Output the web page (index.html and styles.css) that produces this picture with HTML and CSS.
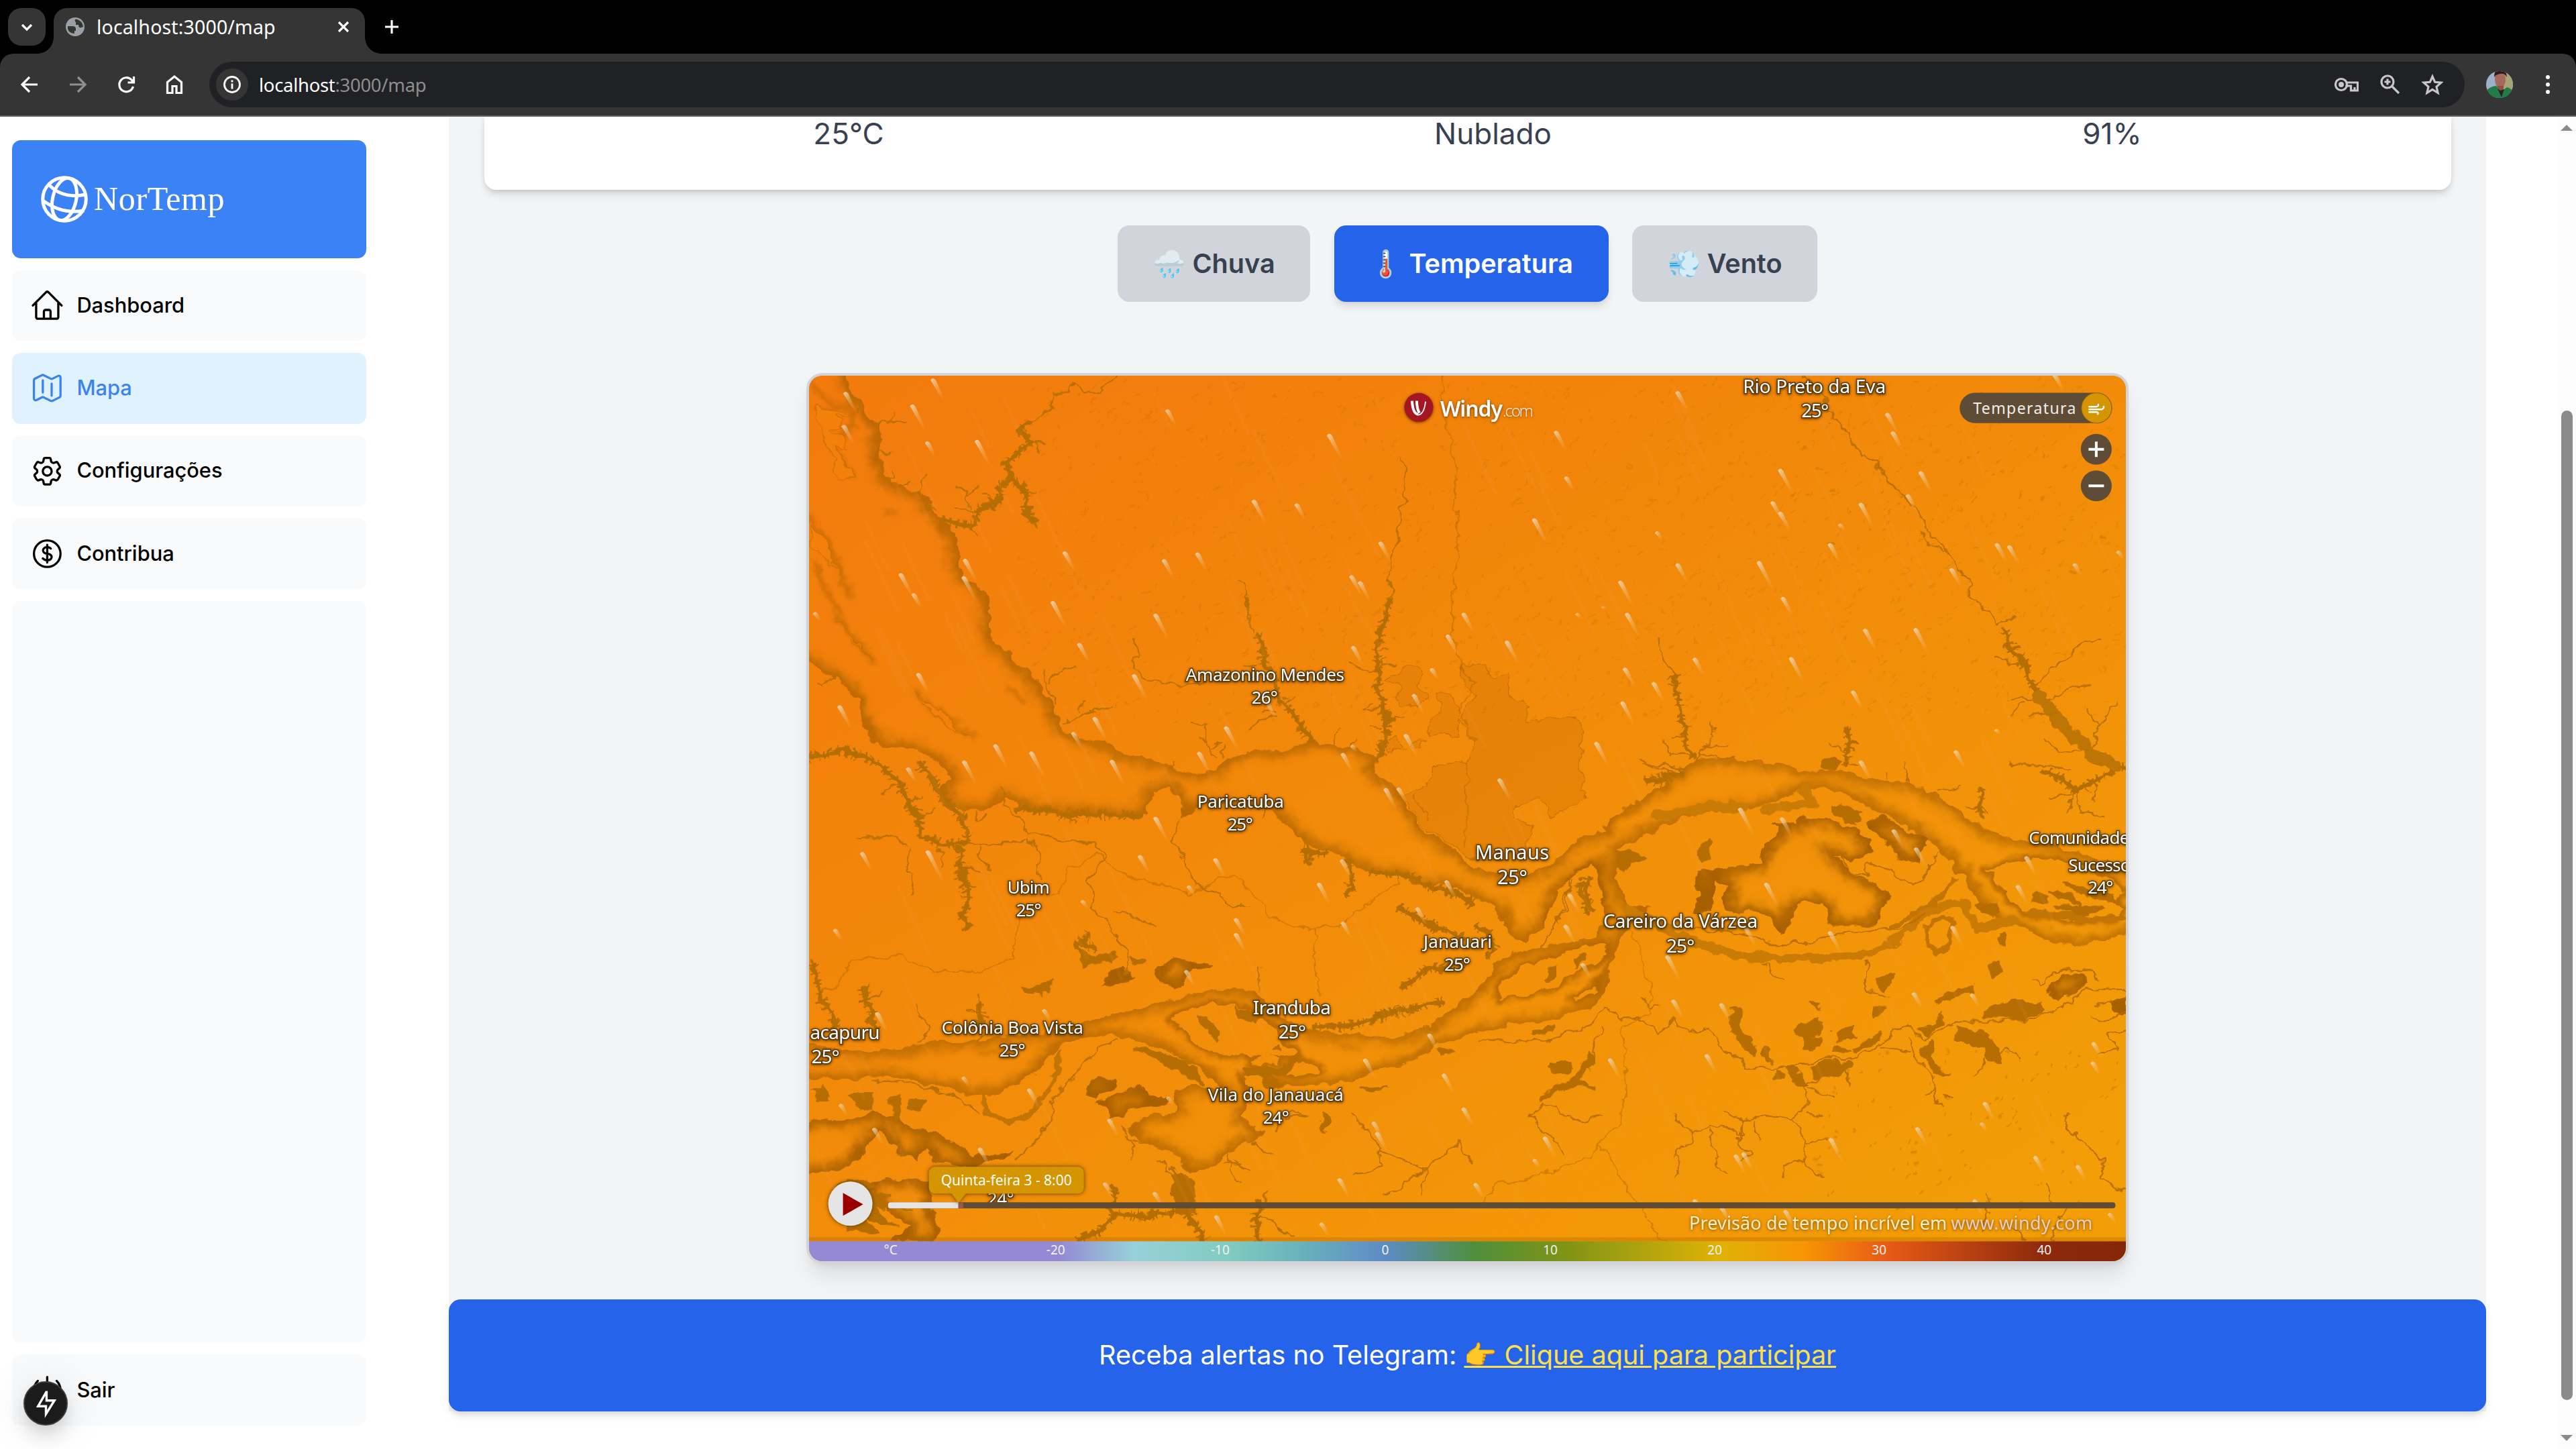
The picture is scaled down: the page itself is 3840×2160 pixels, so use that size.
FILE: index.html
```html
<!DOCTYPE html>
<html lang="pt-BR">
<head>
<meta charset="utf-8">
<title>NorTemp</title>
<link rel="stylesheet" href="styles.css">
</head>
<body>
<header class="browser">
  <div class="tabs">
    <div class="tab-search"><svg viewBox="0 0 56 56"><path d="M21 25l7 7 7-7" class="ln w3"/></svg></div>
    <div class="tab">
      <svg class="favicon" viewBox="0 0 28 28"><circle cx="14" cy="14" r="14" fill="#9aa0a6"/><path d="M3 13h7q5 0 5 4v3h-2v4q-8 0-10-7zM14 3q-1 3 1 4v4h4q0 5 4 4l3-1Q25 5 16 2.500z" fill="#353535"/></svg>
      <span class="tab-title">localhost:3000/map</span>
      <svg class="tab-close" viewBox="0 0 20 20"><path d="M3 3l14 14M17 3L3 17" class="ln w3"/></svg>
    </div>
    <svg class="new-tab" viewBox="0 0 20 20"><path d="M10 0v20M0 10h20" class="ln w3"/></svg>
  </div>
  <div class="toolbar">
    <nav class="nav-icons">
      <svg viewBox="0 0 32 32"><path d="M28 16H6M16 5L5 16l11 11" class="ln w3"/></svg>
      <svg viewBox="0 0 32 32" class="dim"><path d="M4 16h22M16 5l11 11-11 11" class="ln w3"/></svg>
      <svg viewBox="0 0 32 32"><path d="M26.500 19A10.500 10.500 0 1 1 24 9l3 3.500M27.500 4v9h-9" class="ln w3"/></svg>
      <svg viewBox="0 0 32 32"><path d="M5.500 28.500V12.500L16 4l10.500 8.500v16h-7.500v-10h-6v10z" class="ln w3"/></svg>
    </nav>
    <div class="omnibox">
      <span class="site-info"><svg viewBox="0 0 28 28"><circle cx="14" cy="14" r="11.500" class="ln w25"/><path d="M14 12.500v8M14 7.500v3" class="ln w25"/></svg></span>
      <span class="url">localhost<i>:3000/map</i></span>
      <div class="omni-icons">
        <svg width="36" height="36" viewBox="0 0 36 36"><circle cx="10" cy="18" r="8.500"/><circle cx="10" cy="18" r="4" class="solid"/><path d="M17 15h17.500v12h-10v-7h-8M30 27v-5"/></svg>
        <svg width="32" height="32" viewBox="0 0 32 32"><circle cx="12" cy="12" r="9"/><path d="M18.500 18.500L29 29M12 7.500v9M7.500 12h9"/></svg>
        <svg width="32" height="32" viewBox="0 0 32 32"><path d="M16 4l3.700 8.300 9.300.8-7 6.200 2.100 9.200-8.100-5-8.100 5L10 19.300l-7-6.200 9.300-.8z"/></svg>
      </div>
    </div>
    <svg class="avatar" viewBox="0 0 40 40"><rect width="40" height="40" fill="#9db2c9"/><rect x="26" width="14" height="26" fill="#a8a574"/><ellipse cx="21" cy="12" rx="8" ry="14" fill="#a9695a"/><path d="M12 9Q12-3 21-3t10 12Q28 3 21 4T12 9z" fill="#2a1b1d"/><path d="M17 22h9v6l-5 4-5-5z" fill="#8f5145"/><path d="M0 40V29q8-7 15-7l7 9 9-7q7 2 9 6v10z" fill="#1f7d45"/><path d="M17 26l4 3 6-2-4 12z" fill="#2b2028"/></svg>
    <div class="kebab"><b></b><b></b><b></b></div>
  </div>
</header>
<div class="page">
  <aside class="sidebar">
    <div class="brand">
      <svg viewBox="0 0 70 70"><g fill="none" stroke="#fff" stroke-width="5"><circle cx="35" cy="35" r="32.300"/><ellipse cx="35" cy="35" rx="17.500" ry="32" transform="rotate(13 35 35)"/><path d="M11 12Q30 35 67 28M3 37Q32 58 64 52"/></g></svg>
      <span>NorTemp</span>
    </div>
    <a class="item"><svg viewBox="0 0 24 24"><path d="M2.250 12l8.954-8.955c.44-.439 1.152-.439 1.591 0L21.750 12M4.500 9.750v10.125c0 .621.504 1.125 1.125 1.125H9.750v-4.875c0-.621.504-1.125 1.125-1.125h2.250c.621 0 1.125.504 1.125 1.125V21h4.125c.621 0 1.125-.504 1.125-1.125V9.750M8.250 21h8.250"/></svg><span>Dashboard</span></a>
    <a class="item active"><svg viewBox="0 0 24 24"><path d="M9 6.750V15m6-6v8.250m.503 3.498l4.875-2.437c.381-.19.622-.58.622-1.006V4.820c0-.836-.88-1.380-1.628-1.006l-3.869 1.934c-.317.159-.69.159-1.006 0L9.503 3.252a1.125 1.125 0 00-1.006 0L3.622 5.689C3.240 5.880 3 6.270 3 6.695V19.180c0 .836.880 1.380 1.628 1.006l3.869-1.934c.317-.159.690-.159 1.006 0l4.994 2.497c.317.158.690.158 1.006 0z"/></svg><span>Mapa</span></a>
    <a class="item"><svg viewBox="0 0 24 24"><path d="M9.594 3.940c.090-.542.560-.940 1.110-.940h2.593c.550 0 1.020.398 1.110.940l.213 1.281c.063.374.313.686.645.870.074.040.147.083.220.127.324.196.720.257 1.075.124l1.217-.456a1.125 1.125 0 011.370.490l1.296 2.247a1.125 1.125 0 01-.260 1.431l-1.003.827c-.293.240-.438.613-.431.992a6.759 6.759 0 010 .255c-.007.378.138.750.430.990l1.005.828c.424.350.534.954.260 1.430l-1.298 2.247a1.125 1.125 0 01-1.369.491l-1.217-.456c-.355-.133-.750-.072-1.076.124a6.570 6.570 0 01-.220.128c-.331.183-.581.495-.644.869l-.213 1.280c-.090.543-.560.941-1.110.941h-2.594c-.550 0-1.020-.398-1.110-.940l-.213-1.281c-.062-.374-.312-.686-.644-.870a6.520 6.520 0 01-.220-.127c-.325-.196-.720-.257-1.076-.124l-1.217.456a1.125 1.125 0 01-1.369-.490l-1.297-2.247a1.125 1.125 0 01.260-1.431l1.004-.827c.292-.240.437-.613.430-.992a6.932 6.932 0 010-.255c.007-.378-.138-.750-.430-.990l-1.004-.828a1.125 1.125 0 01-.260-1.430l1.297-2.247a1.125 1.125 0 011.370-.491l1.216.456c.356.133.751.072 1.076-.124.072-.044.146-.087.220-.128.332-.183.582-.495.644-.869l.214-1.281z"/><path d="M15 12a3 3 0 11-6 0 3 3 0 016 0z"/></svg><span>Configurações</span></a>
    <a class="item"><svg viewBox="0 0 24 24"><path d="M12 6v12m-3-2.818l.879.659c1.171.879 3.070.879 4.242 0 1.172-.879 1.172-2.303 0-3.182C13.536 12.219 12.768 12 12 12c-.725 0-1.450-.220-2.003-.659-1.106-.879-1.106-2.303 0-3.182s2.900-.879 4.006 0l.415.330M21 12a9 9 0 11-18 0 9 9 0 0118 0z"/></svg><span>Contribua</span></a>
    <div class="filler"></div>
    <a class="item"><svg viewBox="0 0 24 24"><path d="M5.636 5.636a9 9 0 1012.728 0M12 3v9"/></svg><span>Sair</span></a>
  </aside>
  <main class="content">
    <section class="summary"><span>25°C</span><span>Nublado</span><span>91%</span></section>
    <div class="layers">
      <button>🌧️ Chuva</button><button class="on">🌡️ Temperatura</button><button>💨 Vento</button>
    </div>
    <section class="map">
<svg id="map" viewBox="1206.400 560.400 1962.400 1319.200" preserveAspectRatio="none">
<defs>
  <linearGradient id="land" gradientUnits="userSpaceOnUse" x1="0" y1="0" x2="2600" y2="2979"><stop offset="0" stop-color="#f37a0d"/><stop offset=".35" stop-color="#f2850a"/><stop offset="1" stop-color="#f39d07"/></linearGradient>
  <linearGradient id="streak" x1="0" y1="0" x2="1" y2="1"><stop offset="0" stop-color="#e8ddc4" stop-opacity=".9"/><stop offset=".4" stop-color="#ecc68f" stop-opacity=".5"/><stop offset="1" stop-color="#f4b060" stop-opacity="0"/></linearGradient>
  <linearGradient id="scale"><stop offset="0" stop-color="#9589d3"/><stop offset=".19" stop-color="#9589d3"/><stop offset=".247" stop-color="#96d1d8"/><stop offset=".318" stop-color="#81cbc1"/><stop offset=".372" stop-color="#69b3bb"/><stop offset=".438" stop-color="#5d8bc5"/><stop offset=".505" stop-color="#4f8f3c"/><stop offset=".575" stop-color="#809415"/><stop offset=".69" stop-color="#dfb206"/><stop offset=".755" stop-color="#f79505"/><stop offset=".818" stop-color="#e85a16"/><stop offset=".937" stop-color="#8c2a0b"/><stop offset="1" stop-color="#842709"/></linearGradient>
  <filter id="b1" x="-10%" y="-10%" width="120%" height="120%"><feGaussianBlur stdDeviation="12 17"/></filter>
  <filter id="b2" x="-10%" y="-10%" width="120%" height="120%"><feGaussianBlur stdDeviation="6 8"/></filter>
  <filter id="rough" filterUnits="userSpaceOnUse" x="-60" y="-60" width="3220" height="3120" color-interpolation-filters="sRGB"><feTurbulence type="fractalNoise" baseFrequency=".03 .022" numOctaves="3" seed="4" result="n"/><feDisplacementMap in="SourceGraphic" in2="n" scale="34" xChannelSelector="R" yChannelSelector="G"/></filter>
  <path id="water" fill-rule="evenodd" d="
   M75 -40L105 60 135 120 165 170 175 230 180 340 220 395 270 410 320 500 350 560 362 660 376 695 410 730 432 770 430 860 445 925 480 950 490 985 530 1020 555 1080 585 1130 590 1190 640 1230 700 1250 750 1290 830 1315 880 1335 920 1355 960 1340 985 1300 1030 1275 1130 1272 1160 1260 1180 1235 1230 1250 1290 1270 1330 1300 1330 1350 1390 1400 1410 1460 1440 1530 1500 1586 1568 1664 1600 1680 1680 1695 1750 1650 1780 1600 1810 1570 1868 1545 1875 1500 1950 1440 2000 1390 2040 1340 2085 1305 2140 1298 2210 1310 2290 1322 2350 1340 2400 1330 2470 1365 2570 1385 2628 1410 2680 1460 2730 1510 2800 1566 2900 1586 2970 1606 3050 1650 3140 1690
   V1860L3040 1910 2970 1925 2900 1905 2830 1858 2780 1845 2740 1760 2680 1650 2620 1570 2570 1520 2500 1470 2440 1430 2380 1398 2330 1402 2270 1445 2190 1472 2080 1485 2000 1530 1920 1585 1898 1610 1898 1700 1920 1790 1975 1800 1925 1850 1890 1960 1870 2080 1835 2136 1750 2170 1650 2190 1568 2222
   L1480 2256 1430 2306 1380 2326 1280 2376 1200 2396 1110 2396 1040 2380 1035 2440 1020 2500 1050 2520 1075 2556 1010 2596 960 2656 900 2690 880 2630 800 2586 750 2540 790 2500 870 2480 860 2410 900 2392 990 2410 960 2386 910 2330 860 2286 800 2246 740 2231 690 2226 650 2236 600 2256 570 2296 540 2346 500 2386 450 2416 400 2426 340 2406 270 2386 200 2361 100 2371 -40 2374
   V2246L60 2266 140 2281 250 2266 300 2246 380 2246 440 2231 560 2216 640 2186 700 2156 780 2136 850 2106 930 2076 1000 2066 1050 2080 1100 2146 1140 2186 1200 2216 1300 2221 1380 2236 1440 2206 1500 2156 1568 2076 1620 1980 1680 1940 1760 1925 1850 1895 1870 1830 1855 1750 1850 1650 1800 1690 1760 1740 1725 1860 1680 1915 1645 1890 1620 1800 1568 1770
   1500 1720 1420 1722 1400 1690 1310 1675 1250 1620 1170 1590 1130 1520 1090 1480 1000 1460 930 1450 885 1500 880 1450 850 1395 810 1410 795 1490 740 1495 680 1480 600 1482 510 1465 470 1430 430 1470 370 1475 320 1450 315 1410 345 1370 320 1330 260 1270 200 1265 160 1240 130 1170 120 1090 60 1025 -40 935V-40z"/>
  <path id="isles" d="M2763 1671L2858 1636 2940 1640 3050 1700 3087 1745 3060 1775 3087 1800 3050 1841 2958 1836 2858 1815 2808 1756z
   M1623 2101L1628 2046 1690 1986 1768 1956 1873 1916 1868 1956 1808 2016 1748 2066 1688 2091z
   M860 2171L900 2136 960 2121 1010 2121 1080 2176 1145 2286 1120 2296 1030 2291 980 2291 930 2266 900 2226z
   M1040 2306L1075 2291 1115 2304 1100 2321 1060 2326z M1120 2351L1150 2306 1190 2326 1200 2346 1150 2361z M1025 2356L1060 2350 1100 2380 1050 2395 1028 2385z
   M1740 1840L1800 1690 1845 1660 1858 1780 1850 1830 1760 1890z
   M1800 2100L1850 2050 1845 2075 1810 2105z"/>
  <path id="lakes" d="M2328 1496L2398 1506 2468 1546 2498 1606 2448 1646 2408 1626 2438 1676 2498 1716 2542 1756 2518 1806 2498 1860 2398 1860 2378 1786 2338 1776 2308 1806 2308 1846 2278 1886 2248 1826 2218 1811 2158 1816 2148 1776 2158 1726 2128 1706 2118 1816 2078 1816 2088 1756 2078 1676 2168 1666 2228 1656 2248 1586 2278 1536 2258 1516 2318 1526z
   M2478 1521L2518 1486 2568 1536 2628 1566 2608 1616 2608 1656 2558 1636 2518 1566z
   M-40 2520L60 2501 120 2506 160 2476 210 2496 250 2536 300 2546 340 2576 400 2626 490 2614 465 2641 360 2666 300 2640 280 2600 260 2640 220 2626 180 2546 150 2570 130 2636 80 2671 -40 2700z
   M140 2720L200 2700 290 2716 300 2806 320 2876 300 2912 200 2912 245 2860 180 2800z
   M825 2000L860 1960 950 1990 945 2000 910 2005 885 2045 865 2075 830 2045z M690 2060L740 1990 775 2035 740 2050z
   M650 2420L670 2370 730 2365 725 2400 680 2440z M680 2450L770 2400 795 2390 800 2430 850 2430 850 2460 760 2470 720 2505z
   M2900 2090L2930 2020 2980 2015 3000 2050 2960 2090 2930 2110z M3050 2110L3087 2090V2170L3060 2140z"/>
  <clipPath id="cw"><use href="#water"/></clipPath>
  <clipPath id="cl"><use href="#lakes"/></clipPath>
</defs>
<g transform="translate(1200 550) scale(.637755 .446429)">
 <rect width="3100" height="3000" fill="url(#land)"/>
 <g filter="url(#rough)">
  <rect x="-60" y="-60" width="3220" height="3120" fill="url(#land)"/>
  <path fill="#d97808" opacity=".42" stroke="#7e4800" stroke-width="2" d="M1590 990L1605 1025 1650 1010 1655 1100 1688 1120 1692 1175 1800 1160 1818 1200 1812 1330 1828 1440 1780 1470 1745 1500 1735 1460 1715 1430 1670 1450 1660 1500 1700 1530 1690 1600 1640 1640 1568 1640 1500 1580 1440 1520 1400 1420 1460 1390 1470 1330 1545 1310 1565 1250 1530 1170 1568 1090 1545 1060 1530 985zM1360 1040l40-45 38-2-2 60 20 35-28 45-40-10-10-30 20-20zM1480 1085l30 0 20 40-5 60 0 40-30-5-35 5 0-60 20-20zM1360 1240l20-10 25 40-45 5zM1415 1240l30-5-10 30-20-5z"/>
  <g id="terrain"></g>
  <g class="road"><path d="M1490 22L1485 120 1518 270 1528 590 1515 800 1528 990 1568 1050 1530 1140 1568 1250M1545 1310V1595M1440 1526L1390 1620 1385 1720 1340 1760 1250 1860 1180 1866 1105 1850 1010 1696 965 1696 910 1755 745 1686 685 1620 620 1660 615 1710 575 1755M505 1800L485 1966 410 2011 300 2006 225 1960 110 1975 70 2066 20 2090M1195 1866l-5 160 15 30v40M1935 1880l15 100 30 80-5 90-60 50-5 300-80 140-140 60-70 25-50 70M1858 2594L2010 2925M1460 1500l-25-40-10-40"/></g>
  <use href="#water" fill="url(#land)"/>
  <g clip-path="url(#cw)"><g filter="url(#b1)" fill="none" stroke="#a65f02" opacity=".8"><use href="#water" stroke-width="36"/></g><g filter="url(#b2)" fill="none" stroke="#a65f02" opacity=".75"><use href="#isles" stroke-width="26"/><path stroke-width="8" d="M9 490L60 600 85 690 110 770M20 640L80 830 160 980M250 1070L300 1130 400 1235M470 1060l50 60M20 130l90 10 0 60-45 60 40 100M10 50l60 70 40 0M180 480h35M400 2285h70M1240 2260l60 10"/></g></g>
  <use href="#isles" fill="url(#land)"/>
  <use href="#lakes" fill="url(#land)"/>
  <g clip-path="url(#cl)"><use href="#lakes" fill="none" stroke="#a65f02" stroke-width="40" filter="url(#b1)"/></g>
  <g class="isle-detail"><path d="M20 120l20 100 25 80 20 70 25-10-25-60-10-40 25 10-15-50-30-20 40 0-20-40 30 0zM15 520l40 80 25 90-25-60-40-40zM80 840l75 130-50-70zM255 1080l50 50 80 100-60-50z"/></g>
  <g class="trib thick"><path d="M1990 1490l90-20 60-10 60 4M2240 1470l60-10 60-15-30-50"/><path d="M1920 1800C2000 1860 2080 1925 2170 1955 2240 1972 2400 1975 2490 1948 2560 1915 2570 1870 2620 1815 2670 1775 2710 1770 2720 1820 2735 1870 2740 1885 2790 1850L2830 1845"/></g>
  <g class="trib loop"><path d="M595 2280C590 2360 570 2436 520 2490 480 2520 430 2520 415 2430M2868 1815l100 10 60 15 60-10M2540 1860l60-50 70-60 15-45M2620 1860l0 60 30 35 30-40 5-70-25-20-30 30"/></g>
  <g class="trib mid" id="branches">
    <path d="M320 505L360 520 395 515 410 470 455 435 455 400 475 370 470 320 500 280 525 240 505 210 525 180M475 370L510 390 520 450 520 490 540 510"/>
    <path d="M1060 890L1070 930 1075 1000 1100 1040 1110 1110 1140 1150 1165 1200 1180 1240M1370 770L1355 830 1345 890 1338 1000 1348 1120 1365 1170 1360 1230 1335 1310"/>
    <path d="M10 1295L90 1275 150 1300 195 1340 225 1400 245 1450 270 1500 272 1560 330 1590 380 1580 375 1500 340 1470 315 1410 290 1350 270 1320M358 1600l10 80 10 70-10 70 15 50"/>
    <path d="M2030 1030L2045 1100 2048 1180 2055 1250 2075 1300M2434 1200L2442 1260 2432 1320M2800 870L2820 930 2850 990 2870 1070 2900 1110 2930 1170 2980 1250 3020 1300 3087 1335M3050 1340L3000 1390 2970 1410 2940 1370 2900 1340M2745 1410v90M2045 1340l-40 30-45 5"/>
    <path d="M860 2670L870 2780 900 2830 930 2912M720 2820L780 2830 860 2810M720 2820L690 2880 640 2912M720 2820V2730M1060 2912l-5-100 5-40M500 1465l100 20 90 0 90 12"/>
    <path d="M1190 2200L1280 2190 1380 2150 1490 2110M1400 2060L1460 2000 1540 1990M1390 1800L1430 1830 1480 1870 1540 1900M1330 2160l100-30"/>
    <path d="M1825 1700l5 90 15 20M1810 1720l20 100M1220 1620l-60-15 20 40M1270 1640l15 60-20 60M1320 1680l100 15 50 40 60 20 30 30M680 1930l-40-10 20-30M1568 1860l40 40-10 60M130 2060l25 80 5 80M410 2120l0 60-20 20M20 1990l15 100 40 110"/>
  </g>
  <g class="trib big"><path d="M2885 1095L2920 1160 2960 1220 3010 1290 3060 1325"/></g>
  <g class="trib thin"><path d="M525 180L550 160 575 130 580 85 620 85 630 50 650 75 690 80 725 22M530 245l30 5M530 245l20 35M540 510l2 25M515 420l25-10M385 515l15 45M400 480l-50-10M385 470l-5-60-20-20M380 430l20-30M430 430l-10-15M165 190l15-15 30 5 25 0M195 180l15-30M180 275l20 5M200 375l5-30M220 395l20-20M270 410l0-20 20-35M285 455l25 10M95 22l10 30 20 90"/>
    <path d="M1400 305L1406 340 1398 380 1402 440 1390 500 1388 570 1375 620 1365 680 1370 740 1362 770M1012 700L1030 740 1035 810 1050 880M768 900L775 960 770 1000 800 1040 880 1057 940 1045M1335 1010l-45-10-20-15M1345 1000l15-35M1350 990l35-5M1120 1120l20-30M1110 1160l-50 15-20 30M1140 1150l15 10M1100 1150l-30-10M1060 990l-30 5M1375 1160l25 5M1350 1130l-40 10 10-20M1350 1200l-25 0M1240 1250l5-45M1270 1270l15-30"/>
    <path d="M555 1000L560 1050 570 1090 585 1120M570 1050L590 1010 635 995M610 1190L640 1150 715 1130M640 1140l20-30M620 1180l-10-20M665 1140l10 10M960 1300L940 1250 940 1190 905 1180M940 1240l-15-10M950 1260l15-10M970 1300l10-40M860 1310l5 30"/>
    <path d="M9 1290h20M65 1030l-15 30-20-10M220 1380l-35 30M250 1450l15-30M270 1490l30-20M465 1400l0 60 40 40 20 50 80 20 80 20 20 40-40 80 15 100 40 50 10 50 30 30-10 80M720 1810l60 20 40 35M400 1480l0 30 30-20M600 1490l-10 25M620 1490l10 30M660 1490v30M880 1510l-20 60 30 80 30 80 40 10 40 60 30-10M245 1600l-10 70 20 70-10 20M240 1590l-50-30-70 0M375 1580l60 10 90-20 25 50 0 80M405 1595l5 50 25 30M315 1600l0 60M380 1670l25 5M375 1730l25 0M1070 1500l10-30"/>
    <path d="M9 1976L30 2040 45 2130 70 2180 100 2230M130 2060L155 2140 160 2210M155 2100l30-20M260 2130l25 60-15 60M410 2090l-10 60 20 60-10 30M380 2140l50 20M1065 2000l-5 80M150 2375L200 2376 350 2420 410 2480M735 2240L690 2260 570 2460 580 2490 550 2570 490 2640"/>
    <path d="M740 2530l30 60-10 50M750 2570l50 10M830 2640l20 60M990 2600l0 80 30 40M1040 2580l50 40M980 2650l40 0M1000 2640l40 30M1280 2476L1300 2530 1350 2600 1340 2660 1290 2690M1350 2610L1450 2670 1530 2580 1568 2660M1450 2670l-5 90M1450 2670l-90 90M1065 2830l80 60M1060 2810l30-60M1120 2500l50-5-30-20-30 10-10 60"/>
    <path d="M2335 22L2390 110 2405 180 2440 210 2450 250 2475 290 2500 310 2530 370 2560 415 2600 480 2620 540 2670 610 2685 660 2710 690 2725 720 2712 740 2740 780 2770 810 2790 860M2608 540L2630 590 2660 605M1995 898L1998 940 2020 980 2032 1040M2790 860l35-30M2850 980l-30 5-10-15-30 0M2870 1070L2900 1020 2960 950 3000 910 3025 905M2915 1110L2960 1060 3000 1055M2868 1100l-55 0M2850 1110l-40 50M2930 1150l-70 5M3010 1260l10-60 30-50 10-30M3020 1190l-25-55M3000 1270l-70 10-35-40M2960 1335l-50-10-80-5-10-10M2970 1410l-20 70M2975 1410l10 60 50 25M2970 1420l-60 10M3010 1380l0 60"/>
    <path d="M2020 1290l-20-50M2015 1280l50 10M2060 1240l-30-10M2080 1310l30-60 20-30-10-40M2100 1260l60-10M2060 1330l-90-10-20-20M2050 1350l-90-30M2030 1380l-10-40M2090 1290l80 10M2432 1280l-35-30M2440 1320l20 10M2525 1370l-5-30M2570 1385l5-70M2640 1410l60-15M2745 1450l20 40M2740 1470l-20-10"/>
    <path d="M2070 1860C2120 1890 2180 1870 2240 1905 2290 1930 2340 1915 2390 1895 2450 1875 2530 1880 2570 1860L2620 1820M2650 1600L2620 1700 2590 1720 2560 1710 2540 1670 2490 1650 2480 1690 2440 1680 2415 1620 2430 1610M2240 1985l20 40 20 20M2480 1980l0 90 50 30M1955 2096l25 40 20-10"/>
    <path d="M1568 2240L1650 2246 1740 2240 1840 2190 1855 2150 1875 2130 1910 2176 1950 2170 1990 2220 2030 2170 2060 2210 2110 2200 2140 2260 2210 2335 2300 2330 2330 2320 2400 2300 2440 2310 2500 2270 2560 2200 2580 2190 2610 2240 2690 2180 2780 2180 2870 2170 2950 2120 3000 2060 3087 2080M1860 2190L1840 2300 1820 2370 1810 2390M1720 2460l40 0 20 40 40 10 40-20M1725 2455L1700 2490 1715 2540 1750 2570 1770 2620"/>
    <path d="M2033 2490L2050 2530 2085 2550 2110 2520 2150 2530 2190 2555 2190 2500 2150 2490M2085 2550L2080 2580 2035 2610 2040 2700M2110 2530L2115 2600 2150 2680M2190 2505L2240 2490 2310 2510 2340 2460 2340 2390 2380 2360M2340 2480l30 20M2310 2510l30 60 0 70-60 20 0 40M2335 2635l40 65M2340 2580l20-10 25 0M2190 2510l-10 80 30 30-20 20M2220 2510l5 60M2350 2400l50 35M2580 2240L2590 2300 2640 2370 2640 2450 2660 2470M2640 2410l-20 10M2660 2430l20 0M2580 2280l-60-20M2640 2350l30 0M2430 2330l10 60"/>
    <path d="M2770 2290l40-20 30 40M2760 2300l-30 60M3087 2150l-60 30-20-20M3060 2110l-40 20M3087 2200l-40 20 20 50-40 20M2955 2484L2945 2520 2990 2590 3035 2640 3030 2700 3060 2735 3087 2740M2905 2720l10 60 30 20-20 60-10 50M2765 2756v60l-20 60M2810 2850l40 60M2875 2040L2890 2060 2910 2010 3000 2005 3025 2040M1800 1700L1770 1780 1760 1850M1790 1700l-10 80-30 90-30 60"/>
  </g>
  <g class="blobs">
    <path d="M2380 1310l20-5 20 12-10 12-30-5zM2405 1460l20-5 45 30-15 35-40-35zM1900 1615l30-5 35 25-30 10-15 25-20-10zM2095 1590l15-22 10 10-5 50-25 20zM1740 2000l15-15-5 40-18 20zM1800 1965l25-10-20 45z"/>
    <path d="M2160 2210l10-80 15 5-5 60 30 50 10 40-20-10-20-50zM2240 2260l15 10 5 45-15-5zM2320 2200l50-35 10 20-20 45-35 0zM2335 2235l35 5-10 30-25 0zM2405 2210l40-20 10 40-40 10zM2410 2260l15 0 10 20-30 0zM2445 2270l60-45 5 15-60 45zM2350 2115l25 5-10 15zM2495 2130l30 5-20 25zM2510 2030l30-5-15 55-15-15zM2640 2110l30-25 65-30 0 25-50 10-30 30zM2600 2200l40-5 15-50 5 40-40 40zM2760 2140l50-30 80 15 0 25-50 20-80-5zM2690 2195l40 20 20-10 30 50 10 60-20-10-10-40-70-20zM2765 1990l25-10 5 40-20 10z"/>
    <path d="M2270 2340l20 15-5 15-20 0zM2300 2330l50 60-40-5zM2350 2330l40-20 50 10-20 35-60 10zM1745 2320l40-10-5 35-30 5zM1720 2420l60-30 40-60 15-50 3 40-25 60 25 20-40-10-60 30-20 25zM1700 2215l50-20 0 10-40 20zM2740 1790l40-5 5 30-25 5zM2790 1890l20 0-5 25-15 0zM2870 1750l35 5-5 30-30-5zM2910 1735l50 25 20 35-40-25zM2940 1710l50 30 40 5 30 30-80-15zM2920 1800l80-5 40 5-50 20zM2610 2270l20-25 10 20-15 30 40 60-20-10-30-40z"/>
    <path d="M510 2070l30-5 30-20 0 40-15-10-10 15zM640 1935l30 30 60-20-20 35-40 0-20 20zM765 1965l30 10-20 15zM920 2165l20 0 25 55-5 20-20-30zM770 2270l30-5 90 50 40 75-70-60zM1095 2265l20-8 0 20zM110 2420l50 0-5 50-30-10zM200 2440l30-15-20 80zM245 2440l30 0-5 30-30-10zM25 2410l20-10 15 40-30 0zM1010 2130l50 30-10 20-30-10zM1030 2330l60 10 40-20-20 35-70 5zM1075 2365l50 20-40 15zM1210 2480l15 30-15 40zM1480 2270l40 8-30 15zM1300 2400l60-8-30 18zM850 2700l30-20 30 60 0 80-40 0-5-60z"/>
    <path d="M80 2720l30-20 60 30-40 10 70 20-40 15 80 30-90-5 60 60-80-40 40 70-70-20z"/>
  </g>
 </g>
 <g id="wind"></g>
</g>
<rect x="1206" y="1844" width="1964" height="6" fill="#a85f00" opacity=".3"/>
<g class="lbl s30"><text x="1768" y="1015" textLength="236">Amazonino Mendes</text><text x="1866" y="1049" textLength="39">26°</text><text x="1785" y="1204" textLength="129">Paricatuba</text><text x="1830" y="1238" textLength="38">25°</text><text x="1502" y="1332" textLength="63">Ubim</text><text x="1515" y="1366" textLength="38">25°</text><text x="1404" y="1541" textLength="211">Colônia Boa Vista</text><text x="1490" y="1575" textLength="39">25°</text><text x="1801" y="1641" textLength="202">Vila do Janauacá</text><text x="1883" y="1675" textLength="39">24°</text><text x="2122" y="1413" textLength="102">Janauari</text><text x="2153" y="1447" textLength="39">25°</text><text x="3024" y="1258" textLength="150">Comunidade</text><text x="3083" y="1299" textLength="93">Sucesso</text><text x="3112" y="1332" textLength="38">24°</text><text x="1472" y="1796" textLength="40">24°</text></g>
<g class="lbl s32"><text x="2598" y="586" textLength="213">Rio Preto da Eva</text><text x="2685" y="622" textLength="41">25°</text><text x="1208" y="1549" textLength="104">acapuru</text><text x="1210" y="1585" textLength="42">25°</text><text x="1868" y="1512" textLength="116">Iranduba</text><text x="1906" y="1548" textLength="41">25°</text><text x="2390" y="1383" textLength="230">Careiro da Várzea</text><text x="2484" y="1420" textLength="42">25°</text></g>
<g class="lbl s34"><text x="2199" y="1281" textLength="110">Manaus</text><text x="2232" y="1318" textLength="45">25°</text></g>
<g class="windy"><circle cx="2115" cy="607.700" r="21.500" fill="#a51622"/><path d="M2105 598q1 19 9 20M2112 598q0 12 4 18" stroke="#fff" stroke-width="4" fill="none"/><path d="M2113 619q10 0 12-20" stroke="#fff" stroke-width="1.800" fill="none"/><text x="2147" y="621" textLength="93" class="wname">Windy</text><text x="2240" y="621" textLength="46" class="wcom">.com</text></g>
<g class="ctl"><rect x="2921" y="586" width="227" height="45" rx="22.500"/><circle cx="3124.500" cy="670" r="23"/><circle cx="3124.500" cy="724.500" r="23"/></g>
<text x="2941" y="617" textLength="153" class="pill">Temperatura</text>
<circle cx="3125" cy="608.500" r="22.500" fill="#d49500" stroke="#8a6310"/>
<path d="M3113 606.500h12q4-1 2-4M3113 610.500h20q4-2 2-5M3113 614.500h12q4 1 1 4" fill="none" stroke="#fff" stroke-width="2.500"/>
<path d="M3113 670h23M3124.500 658.500v23M3113 724.500h23" stroke="#fff" stroke-width="4"/>
<g class="ctl"><rect x="1324" y="1792" width="1829" height="9" rx="4"/></g>
<path d="M1328 1792H1429V1801H1328q-4 0-4-4.500t4-4.500z" fill="#e5e5e5"/><rect x="1429" y="1792" width="7" height="9" fill="#9c5a4a"/>
<g class="shade"><path d="M1418 1778h23l-12 15z" fill="#d49500"/><rect x="1385" y="1739" width="231" height="40" rx="9" fill="#d49500"/></g>
<text x="1403" y="1767" textLength="195" class="tip">Quinta-feira 3 - 8:00</text>
<circle cx="1268" cy="1794" r="33" fill="#e5e5e5" class="shade"/><path d="M1257 1778l30 17-30 17z" fill="#9a0000"/>
<g class="credit"><text x="2518" y="1833" textLength="384" fill="#fff0c8">Previsão de tempo incrível em</text><text x="2908" y="1833" textLength="211" fill="#e8cfc4">www.windy.com</text></g>
<rect x="1206" y="1850" width="1964" height="31" fill="url(#scale)"/>
<g class="legend"><text x="1328" y="1870">°C</text><text x="1574" y="1870">-20</text><text x="1819" y="1870">-10</text><text x="2065" y="1870">0</text><text x="2311" y="1870">10</text><text x="2556" y="1870">20</text><text x="2801" y="1870">30</text><text x="3047" y="1870">40</text></g>
</svg>
    </section>
    <section class="banner"><p>Receba alertas no Telegram: <a>👉 Clique aqui para participar</a></p></section>
  </main>
  <div class="scrollbar"><i class="up"></i><b></b><i class="down"></i></div>
</div>
<div class="dev-badge"><svg viewBox="0 0 66 66"><path d="M34 15L21 37.500h12.500V50L47 28.500H34.500V15z" fill="none" stroke="#fff" stroke-width="3.600"/></svg></div>
<script src="map.js"></script>
</body>
</html>
```
FILE: styles.css
```css
* { box-sizing: border-box; }
body { margin: 0; width: 3840px; height: 2160px; overflow: hidden; display: flex; flex-direction: column; background: #fff; font-family: Inter, "Liberation Sans", sans-serif; }
.ln { fill: none; stroke: #fff; }
.w3 { stroke-width: 3.2; }
.w25 { stroke-width: 2.8; }

.browser { height: 174px; flex: none; background: #000; color: #fff; font-family: "Noto Sans", sans-serif; border-bottom: 2px solid #656363; }
.tabs { height: 80px; padding: 12px; display: flex; }
.tab-search { width: 56px; height: 56px; border-radius: 20px; background: #353535; }
.tab { position: relative; margin-left: 12px; width: 464px; height: 68px; padding: 0 22px 12px 18px; background: #353535; border-radius: 20px 20px 0 0; display: flex; align-items: center; }
.tab::before, .tab::after { content: ""; position: absolute; bottom: 0; width: 24px; height: 24px; }
.tab::before { left: -24px; background: radial-gradient(circle at 0 0, #0000 23.500px, #353535 24px); }
.tab::after { right: -24px; background: radial-gradient(circle at 100% 0, #0000 23.500px, #353535 24px); }
.favicon { width: 28px; height: 28px; }
.tab-title { margin-left: 18px; font-size: 28.5px; letter-spacing: .15px; white-space: nowrap; }
.tab-close { width: 20px; margin-left: auto; }
.new-tab { width: 20px; height: 20px; margin: 18px 0 0 30px; }
.toolbar { height: 92px; padding: 0 39px 0 28px; background: #353535; border-radius: 20px 20px 0 0; display: flex; align-items: center; }
.nav-icons { display: flex; gap: 40px; }
.nav-icons svg { width: 32px; height: 32px; }
.dim { opacity: .45; }
.omnibox { margin-left: 36px; width: 3362px; flex: none; height: 68px; border-radius: 34px; background: #202124; display: flex; align-items: center; padding: 0 20px 0 10px; }
.site-info { width: 48px; height: 48px; border-radius: 50%; background: #353535; display: flex; align-items: center; justify-content: center; }
.site-info svg { width: 28px; }
.url { margin-left: 16px; font-size: 27.5px; letter-spacing: -.3px; }
.url i { font-style: normal; color: #8e8e8e; }
.omni-icons { margin-left: auto; padding-right: 12px; display: flex; align-items: center; gap: 31px; }
.omni-icons svg { fill: none; stroke: #c7c7c7; stroke-width: 3.2; }
.omni-icons .solid { fill: #c7c7c7; stroke: none; }
.avatar { width: 40px; height: 40px; border-radius: 50%; margin-left: 32px; }
.kebab { display: flex; flex-direction: column; gap: 5px; margin-left: auto; }
.kebab b { width: 6px; height: 6px; border-radius: 50%; background: #fff; }

.page { flex: 1; display: flex; min-height: 0; }
.sidebar { width: 669px; flex: none; padding: 35.200px 123px 35.200px 17.600px; display: flex; flex-direction: column; gap: 17.600px; }
.brand { height: 176px; flex: none; border-radius: 13px; background: #3b82f6; padding-left: 43.500px; display: flex; align-items: center; color: #fff; font-family: "Liberation Serif", serif; font-size: 50px; }
.brand svg { width: 70px; height: 70px; }
.brand span { margin: -3px 0 0 9px; letter-spacing: .6px; }
.item { height: 105.600px; flex: none; border-radius: 13px; background: #f9fafb; padding-left: 26.400px; display: flex; align-items: center; gap: 17.600px; color: #000; font-weight: 500; font-size: 30.800px; }
.item svg { width: 52.800px; height: 52.800px; fill: none; stroke: currentColor; stroke-width: 1.5; stroke-linecap: round; stroke-linejoin: round; }
.item span { margin-top: -2px; }
.item.active { background: #e0f2fe; color: #3b82f6; }
.filler { flex: 1; border-radius: 13px; background: #f9fafb; }

.content { width: 3037px; height: 1930px; flex: none; background: #f3f4f6; display: flex; flex-direction: column; align-items: center; }
.summary { width: 2932px; height: 109px; flex: none; background: #fff; border-radius: 0 0 17.600px 17.600px; box-shadow: 0 8.800px 13.200px -2px #0000001a, 0 4.400px 8.800px -4px #0000001a, 0 0 10px #00000010; clip-path: inset(0 -40px -40px -40px); display: grid; grid-template-columns: 1087px 834px 1012px; color: #374151; font-size: 44px; line-height: 50px; text-align: center; }
.layers { margin-top: 53px; display: flex; gap: 35.200px; }
.layers button { height: 114px; border: 0; padding: 0 52.800px; border-radius: 17.600px; background: #d1d5db; color: #374151; font: 600 39.600px Inter, sans-serif; }
.layers .on { background: #2563eb; color: #fff; box-shadow: 0 8.800px 13.200px -2.200px #0000001a, 0 4.400px 8.800px -4.400px #0000001a; }
.map { margin-top: 106px; width: 1971.200px; height: 1328px; flex: none; border: 4.400px solid #d1d5db; border-radius: 24px; overflow: hidden; box-shadow: 0 22px 33px -6.600px #0000001a, 0 8.800px 13.200px -8.800px #0000001a; }
.map svg { display: block; width: 100%; height: 100%; font-family: "Noto Sans", sans-serif; }
.banner { margin-top: 53px; width: 100%; height: 167px; flex: none; border-radius: 17.600px; background: #2563eb; color: #fff; box-shadow: 0 8.800px 13.200px -2.200px #0000001a, 0 4.400px 8.800px -4.400px #0000001a; display: flex; align-items: center; justify-content: center; font-size: 39.600px; }
.banner p { margin: -2px 0 0; }
.banner a { color: #fde047; text-decoration: underline; }

.trib { fill: none; stroke: #b46e03; stroke-linejoin: round; stroke-linecap: round; }
.trib path { vector-effect: non-scaling-stroke; }
.trib.thin { stroke-width: 2.2; stroke: #b87005; }
.trib.mid { stroke-width: 6.5; }
.trib.fringe { stroke-width: 15; stroke-linecap: butt; stroke-dasharray: 3 7 2 11 4 5; }
.trib.loop { stroke-width: 8; stroke: #c27505; }
.trib.big { stroke-width: 18; stroke: #bd7506; }
.trib.thick { stroke-width: 13; stroke: #c97b06; }
.blobs { fill: #b66e02; stroke: #b66e02; stroke-width: 7; stroke-linejoin: round; }
.road path { fill: none; stroke: #a86200; stroke-width: 2; opacity: .45; vector-effect: non-scaling-stroke; }
.isle-detail { fill: #f2800b; stroke: #a65f02; stroke-opacity: .4; stroke-width: 3; }
.lbl { fill: #fff; stroke: #4a3210; stroke-width: 3px; stroke-opacity: .75; paint-order: stroke; filter: drop-shadow(0 1px 2px #3a2300); }
.s30 { font-size: 26px; }
.s32 { font-size: 28px; }
.s34 { font-size: 29px; }
.windy { fill: #fff; filter: drop-shadow(0 1px 2px #6b3a00); }
.wname { font-size: 32px; font-weight: 600; }
.wcom { font-size: 24px; font-weight: 300; opacity: .85; }
.ctl { fill: #5f4c37; }
.pill { font-size: 23px; fill: #f2eee8; }
.tip { font-size: 21px; fill: #fff; }
.shade { filter: drop-shadow(0 0 3px #5a3a00); }
.credit { font-size: 27px; filter: drop-shadow(0 1px 2px #7a4a00); }
.legend { font-size: 19px; fill: #f0f0f0; text-anchor: middle; }

.scrollbar { margin-left: auto; width: 28px; background: #fcfcfc; display: flex; flex-direction: column; align-items: center; padding: 12px 0 12px; }
.scrollbar i { border: 9px solid #0000; flex: none; }
.scrollbar .up { border-top: 0; border-bottom-color: #8b8b8b; }
.scrollbar .down { border-bottom: 0; border-top-color: #8b8b8b; margin-top: auto; }
.scrollbar b { margin-top: 417px; width: 17px; height: 1475px; flex: none; border-radius: 9px; background: #8b8b8b; }
.dev-badge { position: absolute; left: 35px; top: 2059px; width: 66px; height: 66px; border-radius: 50%; background: #1b1b1c; border: 2px solid #3d3d3e; box-shadow: 0 16px 32px -8px #0000003d, 0 4px 70px #0000001c; }
.dev-badge svg { display: block; width: 62px; height: 62px; }
```
FILE: map.js
```js
const NS = "http://www.w3.org/2000/svg";
const wind = document.getElementById("wind");
const terrain = document.getElementById("terrain");

// ragged banks along the wider tributaries
const branches = document.getElementById("branches");
const fringe = branches.cloneNode(true);
fringe.removeAttribute("id");
fringe.setAttribute("class", "trib fringe");
branches.after(fringe);

// particle heads: x, y, trail height
const particles = [
  300,35,70, 252,122,80, 92,190,60, 287,245,45, 403,240,80, 848,138,50, 1226,220,80, 1050,440,75, 1150,452,50,
  375,637,70, 225,685,70, 255,752,45, 372,695,75, 840,638,60, 918,616,55, 608,612,60, 580,778,85, 820,820,80,
  1278,692,60, 1298,712,60, 1346,580,60, 25,815,25, 642,918,60, 770,1022,85, 266,1018,65, 1503,890,65, 1282,928,60,
  1540,817,60, 82,1126,70, 678,1165,75, 985,1196,75, 446,1256,75, 530,1280,80, 718,1308,80, 922,1281,65, 373,1310,75,
  242,1333,45, 1405,1222,75, 1424,1088,60, 1466,1002,35, 1358,1402,70, 1388,1400,50, 820,1498,80, 628,1215,50,
  96,80,60, 1080,1110,60, 1258,1285,60, 1280,1258,20, 288,1610,100, 135,1616,60, 784,1626,55, 898,1727,30,
  960,1636,60, 1256,1640,60, 1202,1718,70, 1500,1710,60, 1008,1836,55, 1008,1886,60, 1258,1848,50, 72,1872,35,
  650,1776,25, 1432,1800,55, 892,2010,50, 560,2140,35, 170,2150,60, 372,2365,30, 525,2405,60, 85,2456,35,
  1310,2305,60, 1494,2355,60, 1460,2222,50, 850,2432,25, 712,2506,55, 163,2536,50, 1330,2515,50, 1338,2550,60,
  1540,2468,60, 410,2602,60, 1250,2704,60, 818,2750,45, 962,2828,60, 1208,2852,40, 702,2718,50,
  2040,78,60, 1756,210,60, 1780,362,40, 2280,337,80, 2262,445,60, 2280,480,60, 1705,502,80, 1992,545,25,
  2396,585,60, 2040,652,60, 2230,645,90, 2468,450,75, 2530,150,60, 2543,212,60, 2608,345,70, 2578,422,50,
  2420,520,20, 2786,585,60, 2815,592,60, 2968,652,35, 3070,610,25, 2680,668,60, 2286,764,60, 1906,710,80,
  1922,817,75, 1641,910,75, 2478,870,70, 2596,868,80, 2305,965,85, 2080,967,55, 1917,1000,60, 1984,1048,65,
  1911,1113,75, 2450,1077,60, 1850,1248,80, 1624,1370,70, 2690,1276,55, 2468,1310,60, 2785,1205,15, 1866,795,8,
  1806,818,15, 2186,1468,90, 2284,1500,60, 2545,1540,60, 2597,1600,60, 2855,1630,60, 2247,1718,80, 2835,1726,60,
  1788,1755,60, 1778,1858,60, 2200,1866,60, 2396,1880,70, 2682,1862,60, 2016,1960,80, 1818,1986,50, 2030,2108,60,
  2142,2120,60, 2592,2084,50, 2728,2088,40, 1882,2304,65, 2108,2290,60, 1730,2565,65, 2398,2570,80, 2600,2534,60,
  2758,2450,55, 2751,2518,25, 2876,2630,60, 2975,2660,50, 2176,2625,60, 2194,2618,60, 1706,2640,25, 2080,2774,50,
  2144,2800,50, 2292,2810,60, 2734,2775,50, 3012,2250,50, 3010,2315,40, 3050,2820,30, 2922,22,50, 1568,2720,45
];
for (let i = 0; i < particles.length; i += 3) {
  const [x, y, h] = particles.slice(i, i + 3);
  const p = document.createElementNS(NS, "path");
  const w = h * 0.33;
  p.setAttribute("d", `M${x - 6} ${y + 3}q5-12 12 0L${x + w + 5} ${y + h}h-6z`);
  p.setAttribute("fill", "url(#streak)");
  wind.append(p);
}

// small hill marks and faint long trails, placed with a fixed seed
let seed = 7;
const rnd = () => (seed = (seed * 16807) % 2147483647) / 2147483647;
let hills = "", dots = "", trails = "";
for (let i = 0; i < 1500; i++) {
  const x = 500 + rnd() * 2580, y = 40 + rnd() * 1150;
  hills += `M${x | 0} ${y | 0}l${3 + rnd() * 7 | 0}-${5 + rnd() * 12 | 0}`;
}
for (let i = 0; i < 110; i++) dots += `M${2350 + rnd() * 720 | 0} ${2280 + rnd() * 540 | 0}l4-10`;
for (let i = 0; i < 60; i++) dots += `M${2300 + rnd() * 770 | 0} ${250 + rnd() * 500 | 0}l5-10`;
for (let i = 0; i < 190; i++) {
  const h = 120 + rnd() * 130;
  trails += `M${20 + rnd() * 3000 | 0} ${20 + rnd() * 2700 | 0}l${h * 0.33 | 0} ${h | 0}`;
}
const add = (parent, d, width, opacity, color) => {
  const p = document.createElementNS(NS, "path");
  p.setAttribute("d", d);
  p.setAttribute("fill", "none");
  p.setAttribute("stroke", color);
  p.setAttribute("stroke-width", width);
  p.setAttribute("opacity", opacity);
  parent.append(p);
};
add(terrain, hills, 3, 0.16, "#9a5600");
add(terrain, dots, 5, 0.3, "#a66400");
add(wind, trails, 9, 0.07, "#ffb070");
```
